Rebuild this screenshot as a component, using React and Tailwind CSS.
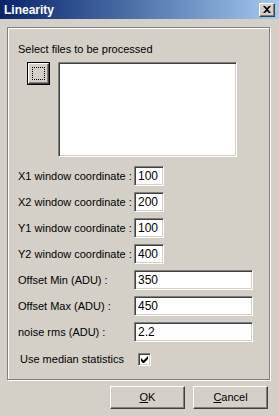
import React from "react";

const font = { fontFamily: '"Liberation Sans", Arial, sans-serif' };

function Sunken({ className = "", children }) {
  return (
    <div
      className={`border border-t-[#808080] border-l-[#808080] border-r-white border-b-white bg-white shadow-[inset_1px_1px_0_#404040,inset_-1px_-1px_0_#d4d0c8] ${className}`}
    >
      {children}
    </div>
  );
}

function Field({ label, value, wide }) {
  return (
    <div className="flex items-center h-[20px]">
      <div className="w-[126px] pl-[10px] text-[11px] leading-[13px] text-black whitespace-nowrap">
        {label}
      </div>
      <Sunken className={`${wide ? "w-[119px]" : "w-[30px]"} h-[20px] flex items-center pl-[3px] text-[12px] text-black`}>
        {value}
      </Sunken>
    </div>
  );
}

function Button({ children, className = "" }) {
  return (
    <div
      className={`border border-t-white border-l-white border-r-[#404040] border-b-[#404040] bg-[#d4d0c8] shadow-[inset_-1px_-1px_0_#808080] flex items-center justify-center text-[11px] text-black ${className}`}
    >
      {children}
    </div>
  );
}

export default function App() {
  return (
    <div className="w-[279px] h-[416px] bg-[#d4d0c8] flex flex-col overflow-hidden" style={font}>
      <div className="h-[19px] bg-gradient-to-r from-[#0a246a] to-[#a6caf0] flex items-center justify-between pl-[4px] pr-[4px]">
        <span className="text-white font-bold text-[12px] leading-[14px]">Linearity</span>
        <Button className="w-[16px] h-[14px]">
          <svg width="8" height="7" viewBox="0 0 8 7">
            <path d="M0 0h2l2 2 2-2h2L5 3.5 8 7H6L4 5 2 7H0l3-3.5z" fill="#000" />
          </svg>
        </Button>
      </div>

      <div className="ml-[7px] mt-[8px] w-[263px] h-[353px] border border-[#808080] shadow-[inset_1px_1px_0_#fff,1px_1px_0_#fff] flex flex-col">
        <div className="mt-[15px] pl-[10px] text-[11px] leading-[13px] text-black">
          Select files to be processed
        </div>
        <div className="mt-[6px] flex items-start">
          <div className="ml-[19px] w-[23px] h-[23px] border border-black">
            <Button className="w-full h-full">
              <div className="w-[13px] h-[13px] border border-dotted border-black" />
            </Button>
          </div>
          <Sunken className="ml-[8px] w-[179px] h-[95px]" />
        </div>
        <div className="mt-[9px] flex flex-col gap-[6px]">
          <Field label="X1 window coordinate :" value="100" />
          <Field label="X2 window coordinate :" value="200" />
          <Field label="Y1 window coordinate :" value="100" />
          <Field label="Y2 window coordinate :" value="400" />
          <Field label="Offset Min (ADU) :" value="350" wide />
          <Field label="Offset Max (ADU) :" value="450" wide />
          <Field label="noise rms (ADU) :" value="2.2" wide />
        </div>
        <div className="mt-[11px] flex items-center h-[13px]">
          <div className="w-[130px] pl-[12px] text-[11px] leading-[13px] text-black whitespace-nowrap">
            Use median statistics
          </div>
          <Sunken className="w-[13px] h-[13px] flex items-center justify-center">
            <svg width="7" height="7" viewBox="0 0 7 7">
              <path d="M0 2v3l2 2h1l4-4V0L2.5 4.5z" fill="#000" />
            </svg>
          </Sunken>
        </div>
      </div>

      <div className="mt-[6px] flex pl-[110px] gap-[8px]">
        <Button className="w-[75px] h-[23px]">
          <span><span className="underline">O</span>K</span>
        </Button>
        <Button className="w-[75px] h-[23px]">
          <span><span className="underline">C</span>ancel</span>
        </Button>
      </div>
    </div>
  );
}
